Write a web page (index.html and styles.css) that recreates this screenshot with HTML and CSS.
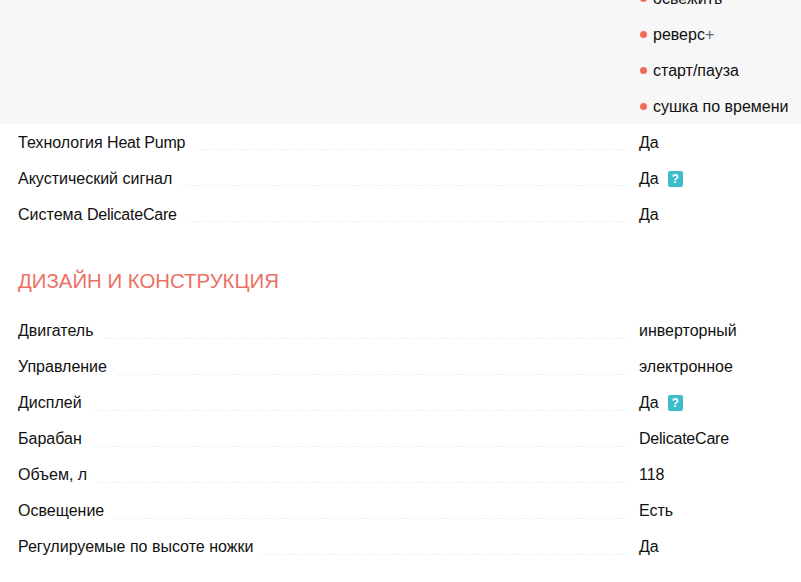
FILE: index.html
```html
<!DOCTYPE html>
<html lang="ru">
<head>
<meta charset="utf-8">
<title>Характеристики</title>
<link rel="stylesheet" href="styles.css">
</head>
<body>
<main class="specs">
  <section class="group group-shaded">
    <div class="row row-list">
      <div class="label"></div>
      <ul class="values">
        <li>освежить</li>
        <li>реверс<span class="plus">+</span></li>
        <li>старт/пауза</li>
        <li>сушка по времени</li>
      </ul>
    </div>
  </section>
  <section class="group group-top">
    <div class="row"><span class="label">Технология <span class="latin">Heat Pump</span></span><span class="dots"></span><span class="value">Да</span></div>
    <div class="row"><span class="label">Акустический сигнал</span><span class="dots"></span><span class="value">Да<span class="hint">?</span></span></div>
    <div class="row"><span class="label">Система <span class="latin">DelicateCare</span></span><span class="dots"></span><span class="value">Да</span></div>
  </section>
  <h2 class="heading">ДИЗАЙН И КОНСТРУКЦИЯ</h2>
  <section class="group">
    <div class="row"><span class="label">Двигатель</span><span class="dots"></span><span class="value">инверторный</span></div>
    <div class="row"><span class="label">Управление</span><span class="dots"></span><span class="value">электронное</span></div>
    <div class="row"><span class="label">Дисплей</span><span class="dots"></span><span class="value">Да<span class="hint">?</span></span></div>
    <div class="row"><span class="label">Барабан</span><span class="dots"></span><span class="value latin">DelicateCare</span></div>
    <div class="row"><span class="label">Объем, л</span><span class="dots"></span><span class="value">118</span></div>
    <div class="row"><span class="label">Освещение</span><span class="dots"></span><span class="value">Есть</span></div>
    <div class="row"><span class="label">Регулируемые по высоте ножки</span><span class="dots"></span><span class="value">Да</span></div>
  </section>
</main>
</body>
</html>
```
FILE: styles.css
```css
html, body {
  margin: 0;
  padding: 0;
  height: 582px;
  overflow: hidden;
  background: #fff;
}
body {
  font-family: "Liberation Sans", Arial, sans-serif;
  font-size: 16px;
  line-height: 36px;
  color: #111;
}
.specs {
  margin-top: -20px;
}
.group-shaded {
  background: #f7f7f7;
  height: 144px;
}
.group-top {
  line-height: 38px;
}
.row {
  display: flex;
  height: 36px;
  padding-left: 18px;
}
.row-list {
  height: auto;
  justify-content: flex-end;
}
.label {
  white-space: nowrap;
}
.latin {
  letter-spacing: -0.22px;
}
.dots {
  flex: 1;
  height: 25px;
  margin-left: 10px;
  margin-right: 10px;
  border-bottom: 1px dashed #f0f0f0;
}
.value {
  width: 162px;
  white-space: nowrap;
}
.row-list .label {
  flex: 1;
}
.values {
  list-style: none;
  margin: 0;
  padding: 0;
  width: 162px;
  white-space: nowrap;
}
.values li {
  display: flex;
  align-items: center;
  height: 36px;
  padding-top: 1px;
  box-sizing: border-box;
  line-height: 35px;
}
.values li::before {
  content: "";
  width: 7px;
  height: 7px;
  margin: 0 6px 0 1px;
  border-radius: 50%;
  background: #ee6c55;
}
.plus {
  color: #5f6b7a;
}
.hint {
  display: inline-block;
  width: 15px;
  height: 16px;
  margin-left: 9px;
  border-radius: 2px;
  background: #3dbdca;
  color: #fff;
  font-size: 12px;
  font-weight: bold;
  line-height: 16px;
  text-align: center;
  vertical-align: 1px;
}
.heading {
  margin: 31px 0 0;
  padding: 0 0 0 18px;
  height: 50px;
  font-size: 20.4px;
  font-weight: normal;
  line-height: 36px;
  color: #ec7063;
}
```
